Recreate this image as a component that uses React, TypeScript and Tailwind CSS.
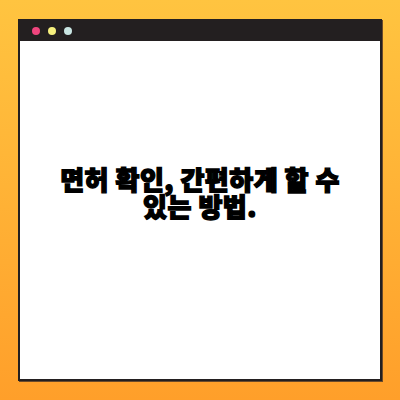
export default function App() {
  return (
    <div className="w-[400px] h-[400px] bg-gradient-to-b from-[#ffc440] to-[#ff9f2a] pt-[19px] pl-[18px]">
      <div className="w-[364px] h-[362px] border-2 border-[#231f20] bg-white flex flex-col shadow-[1px_1px_0_#6b4a2a]">
        <div className="h-[20px] bg-[#231f20] flex items-center gap-[8px] pl-[12px] shrink-0">
          <span className="w-[8px] h-[8px] rounded-full bg-[#f0457e]" />
          <span className="w-[8px] h-[8px] rounded-full bg-[#f6f07e]" />
          <span className="w-[8px] h-[8px] rounded-full bg-[#c9e6e3]" />
        </div>
        <div className="flex-1 flex items-center justify-center pb-[36px]">
          <p
            className="text-center text-[26px] leading-[27px] font-black text-black tracking-[0.5px] [-webkit-text-stroke:1.4px_black]"
            style={{ fontFamily: '"Noto Sans CJK KR", "Noto Sans", sans-serif' }}
          >
            면허 확인, 간편하게 할 수<br />있는 방법.
          </p>
        </div>
      </div>
    </div>
  );
}
